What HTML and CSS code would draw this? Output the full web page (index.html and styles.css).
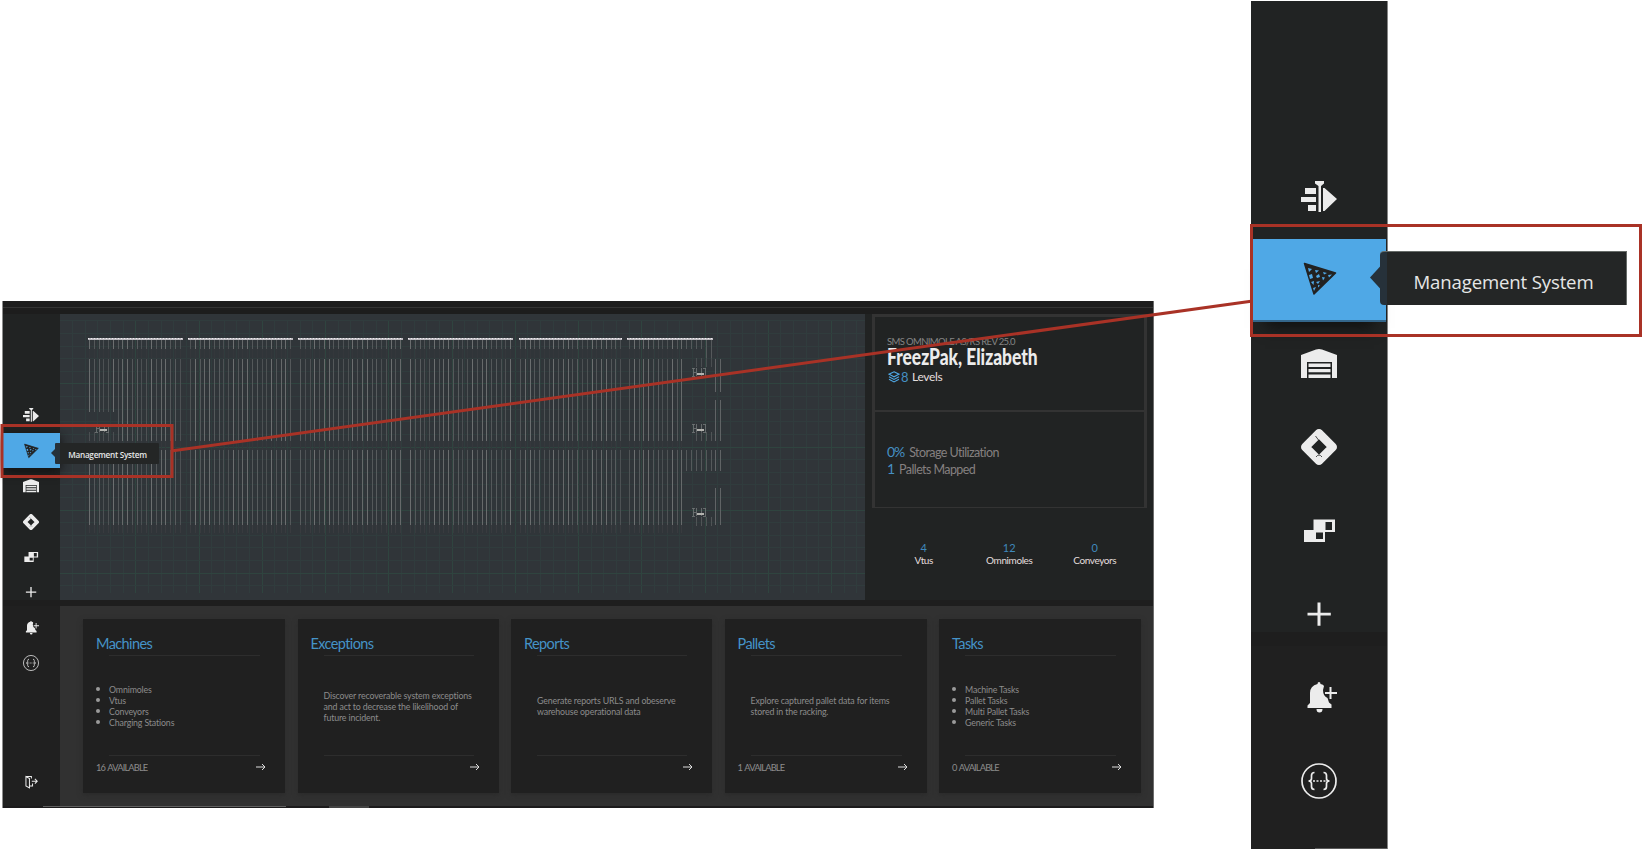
FILE: index.html
```html
<!DOCTYPE html>
<html lang="en">
<head>
<meta charset="utf-8">
<title>Management System</title>
<link rel="stylesheet" href="styles.css">
</head>
<body>
<svg class="defs" aria-hidden="true">
  <symbol id="sorter" viewBox="0 0 36 36"><path d="M4 9h11v6H4zM0 18h15v5H0zM7 26h8v6H7zM14 2h9v2.500L20 7v26h-2.500V7L14 4.500zM22 9h1.500L36 20 23.500 32H22z"/></symbol>
  <symbol id="pizza" viewBox="0 0 36 36"><path d="M3.500 2.500 34.500 12 13 33z" stroke="#222" stroke-width="1.500" stroke-linejoin="round"/><g fill="#4fa8e6"><path d="M7 7l4 1-3 3zM14 9l4 .5-3 2.500zM22 11l4 1-3 1.500zM27 14l4-.5-3 3zM8 14l3-1 1 4-3 1zM15 15l3-2 1 3-3 1zM21 16l3 .5-2 3zM10 21l3-1-.5 4zM15 21l4-1-2 3zM12 27l3-1-2 4zM17 24l2 .5-2 2z"/></g></symbol>
  <symbol id="warehouse" viewBox="0 0 36 36"><path d="M0 9 15 3.500Q18 2.500 21 3.500L36 9v23h-5V16H6v16H0zM7.500 17.500h22v3.500h-22zM7.500 23h22v3.200h-22zM7.500 28.500h22V32h-22z"/></symbol>
  <symbol id="diamond" viewBox="0 0 36 36"><path d="M18 4.300 31.700 18 18 31.700 4.300 18z" fill="none" stroke="currentColor" stroke-width="8.600" stroke-linejoin="round"/><path d="M14.500 7l3 4M15 28q3-4 6 0" fill="none" stroke="#222424" stroke-width=".8"/></symbol>
  <symbol id="pallets" viewBox="0 0 36 36"><path fill-rule="evenodd" d="M12.500 6.500H34V19H24v10H3V17h9.500zM24.500 9v8H31V9zM15 19.500V26h7v-6.500z"/></symbol>
  <symbol id="plus" viewBox="0 0 36 36"><path d="M16.500 6.500h3v10.300h10.300v2.700H19.500v10.300h-3V19.500H6.500v-2.700h10z"/></symbol>
  <symbol id="bell" viewBox="0 0 36 36"><path d="M16.500 4q0-2 1.500-2t1.500 2q3 .5 3.500 2l-1 4q0 6 4.500 8l1.500 4.500 2.500 2V28H6.500v-2.500L9 23V13q0-7 7.500-9zM15.500 29h6q0 3.500-3 3.500t-3-3.500zM28.500 7h2v5H36v2h-5.500v5h-2v-5H24v-2h4.500z"/></symbol>
  <symbol id="braces" viewBox="0 0 36 36"><g fill="none" stroke="currentColor" stroke-width="1.700"><circle cx="18" cy="18" r="17"/><path d="M13.500 9.500q-3 0-3 3v3q0 2.500-3 2.500 3 0 3 2.500v3q0 3 3 3M22.500 9.500q3 0 3 3v3q0 2.500 3 2.500-3 0-3 2.500v3q0 3-3 3M12 18h2m1.500 0h2m1.500 0h2m1.500 0h2"/></g></symbol>
  <symbol id="exit" viewBox="0 0 36 36"><path d="M5 4h14v5M5 4l9 5v24l-9-5zM14 28h8v-6M20 16h14M28 10l6 6-6 6" fill="none" stroke="currentColor" stroke-width="2.600"/></symbol>
  <symbol id="arrow" viewBox="0 0 10 8"><path d="M0 4h9M6 1l3 3-3 3" fill="none" stroke="currentColor" stroke-width="1"/></symbol>
  <symbol id="unit" viewBox="0 0 14 10"><path d="M1 1v8M4.500 1v8M9.500 1v8M13 1v8M0 9h3M0 1h3M11 1h3M11 9h3M1 5h3" fill="none" stroke="#6d7172" stroke-width=".9"/><path d="M5 7h7" stroke="#b4b4b0" stroke-width="1.600"/></symbol>
</svg>

<main class="stage">
  <section class="app">
    <header class="topbar"></header>
    <nav class="rail rail-small">
      <a class="rail-item"><svg><use href="#sorter"/></svg></a>
      <a class="rail-item active"><svg><use href="#pizza"/></svg><span class="tip">Management System</span></a>
      <a class="rail-item"><svg><use href="#warehouse"/></svg></a>
      <a class="rail-item"><svg><use href="#diamond"/></svg></a>
      <a class="rail-item"><svg><use href="#pallets"/></svg></a>
      <a class="rail-item"><svg><use href="#plus"/></svg></a>
      <a class="rail-item"><svg><use href="#bell"/></svg></a>
      <a class="rail-item"><svg><use href="#braces"/></svg></a>
      <a class="rail-item exit"><svg><use href="#exit"/></svg></a>
    </nav>
    <div class="map">
      <svg id="floor" viewBox="60 314 805 286" width="805" height="286" shape-rendering="crispEdges"></svg>
    </div>
    <aside class="info">
      <div class="box">
        <div class="site">
          <div class="rev">SMS OMNIMOLE AS/RS REV 25.0</div>
          <div class="name">FreezPak, Elizabeth</div>
          <div class="levels">
            <svg class="layers" viewBox="0 0 12 12"><path d="M6 .8 11 3.200 6 5.800 1 3.200zM1 5.800l5 2.600 5-2.600M1 8.300l5 2.600 5-2.600" fill="none" stroke="#4fa8e6" stroke-width="1.100"/></svg><b>8</b><span>Levels</span>
          </div>
        </div>
        <div class="usage">
          <div><b>0%</b><span>Storage Utilization</span></div>
          <div><b>1</b><span>Pallets Mapped</span></div>
        </div>
      </div>
      <div class="stats">
        <div><b>4</b>Vtus</div>
        <div><b>12</b>Omnimoles</div>
        <div><b>0</b>Conveyors</div>
      </div>
    </aside>
    <div class="cards">
      <article class="card">
        <h2>Machines</h2>
        <div class="body"><ul><li>Omnimoles</li><li>Vtus</li><li>Conveyors</li><li>Charging Stations</li></ul></div>
        <footer>16 AVAILABLE<svg><use href="#arrow"/></svg></footer>
      </article>
      <article class="card">
        <h2>Exceptions</h2>
        <div class="body"><p>Discover recoverable system exceptions<br>and act to decrease the likelihood of<br>future incident.</p></div>
        <footer><svg><use href="#arrow"/></svg></footer>
      </article>
      <article class="card">
        <h2>Reports</h2>
        <div class="body"><p>Generate reports URLS and obeserve<br>warehouse operational data</p></div>
        <footer><svg><use href="#arrow"/></svg></footer>
      </article>
      <article class="card">
        <h2>Pallets</h2>
        <div class="body"><p>Explore captured pallet data for items<br>stored in the racking.</p></div>
        <footer>1 AVAILABLE<svg><use href="#arrow"/></svg></footer>
      </article>
      <article class="card">
        <h2>Tasks</h2>
        <div class="body"><ul><li>Machine Tasks</li><li>Pallet Tasks</li><li>Multi Pallet Tasks</li><li>Generic Tasks</li></ul></div>
        <footer>0 AVAILABLE<svg><use href="#arrow"/></svg></footer>
      </article>
    </div>
    <div class="bottom"><i></i><i></i></div>
  </section>

  <nav class="rail rail-large">
    <a class="rail-item"><svg><use href="#sorter"/></svg></a>
    <a class="rail-item active"><svg><use href="#pizza"/></svg><span class="tip">Management System</span></a>
    <a class="rail-item"><svg><use href="#warehouse"/></svg></a>
    <a class="rail-item"><svg><use href="#diamond"/></svg></a>
    <a class="rail-item"><svg><use href="#pallets"/></svg></a>
    <a class="rail-item"><svg><use href="#plus"/></svg></a>
    <a class="rail-item"><svg><use href="#bell"/></svg></a>
    <a class="rail-item"><svg><use href="#braces"/></svg></a>
    <i class="rail-foot"></i>
  </nav>

  <svg class="callout" viewBox="0 0 1642 850">
    <path d="M173 450.700 1251 301.300"/>
    <rect x="2" y="425.500" width="170" height="51"/>
    <rect x="1251.500" y="225.500" width="389" height="110"/>
  </svg>
</main>
<script src="map.js"></script>
</body>
</html>
```

FILE: styles.css
```css
* { box-sizing: border-box; }
body {
  margin: 0;
  background: #fff;
  font-family: Lato, sans-serif;
  width: 1642px;
  height: 850px;
  overflow: hidden;
}
.defs { position: absolute; width: 0; height: 0; }
.stage {
  position: relative;
  display: flex;
  justify-content: space-between;
  width: 1642px;
  height: 850px;
  padding: 1px 254px 0 2px;
}
.callout {
  position: absolute;
  inset: 0;
  width: 1642px;
  height: 850px;
  fill: none;
  stroke: #a93226;
  stroke-width: 3;
}

/* dashboard */
.app {
  display: grid;
  grid-template-columns: 57px 805px 288px;
  grid-template-rows: 13px 286px 206px 2px;
  width: 1152px;
  height: 507px;
  margin-top: 300px;
  border-left: 1px solid #8e8e8e;
  border-right: 1px solid #6c6c6c;
  background: #1e1e1e;
}
.topbar {
  grid-column: 1 / 4;
  background: linear-gradient(#1d1d1d 6px, #333 6px, #333 7px, #1d1d1d 7px);
}

/* icon rails */
.rail { display: flex; flex-direction: column; color: #ececec; }
.rail-item {
  position: relative;
  display: flex;
  align-items: center;
  justify-content: center;
  flex: none;
}
.rail-item svg { display: block; fill: currentColor; }
.rail-item.active { background: #4fa8e6; color: #222; }
.tip {
  position: absolute;
  display: flex;
  align-items: center;
  justify-content: center;
  color: #e6e6e6;
  font-family: "Open Sans", sans-serif;
  white-space: nowrap;
}
.tip::before { content: ""; position: absolute; background: #26313a; }

.rail-small {
  grid-row: 2 / 4;
  padding-top: 83.500px;
  background: linear-gradient(#212323 286px, #1e1e1e 286px, #1e1e1e 292px, #202020 292px);
}
.rail-small .rail-item { height: 35.450px; padding-right: 2px; }
.rail-small .rail-item svg { width: 16px; height: 16px; }
.rail-small .exit { margin-top: 83px; }
.rail-small .exit svg { width: 14px; height: 14px; }
.rail-small .active { box-shadow: 0 3px 12px #111; }
.rail-small .tip {
  z-index: 2;
  left: 52px;
  top: 10px;
  width: 104px;
  height: 21px;
  border-radius: 1px;
  background: linear-gradient(90deg, #26313a 5px, #242626 5px);
  font-size: 8.200px;
  font-weight: 600;
  letter-spacing: -0.280px;
  padding: 3px 0 0 1px;
}
.rail-small .tip::before {
  left: -4px;
  top: 5px;
  width: 5px;
  height: 10px;
  clip-path: polygon(0 50%, 100% 0, 100% 100%);
}

.rail-large {
  width: 137px;
  height: 848px;
  padding-top: 154px;
  border-right: 1px solid #858585;
  background: linear-gradient(#212323 631px, #1e1e1e 631px, #1e1e1e 645px, #202020 645px);
}
.rail-large .rail-item { height: 83.500px; padding-right: 1px; }
.rail-large .rail-item svg { width: 36px; height: 36px; }
.rail-large .active {
  margin: 0 1px 0 2px;
  padding-right: 2px;
  border-bottom: 2px solid #34668b;
  box-shadow: 0 18px 14px -12px #111;
}
.rail-large .tip {
  left: 127px;
  top: 12px;
  width: 247px;
  height: 54px;
  border-radius: 4px 0 0 4px;
  border-top: 1px solid #666b68;
  border-right: 1px solid #666b68;
  background: linear-gradient(90deg, #26313a 7px, #242626 7px);
  font-size: 18.600px;
  font-weight: 500;
  letter-spacing: -0.150px;
  padding: 6px 0 0 1px;
}
.rail-large .tip::before {
  left: -10px;
  top: 14px;
  width: 11px;
  height: 24px;
  clip-path: polygon(0 50%, 100% 0, 100% 100%);
}
.rail-foot { width: 72px; height: 1px; margin: auto 0 0 auto; background: #5a5a5a; }

/* floor map */
.map { background: #303539; }
.map svg { display: block; }

/* site summary */
.info { padding-left: 7px; background: #212323; }
.box {
  width: 275px;
  height: 194px;
  border: 3px solid #333;
  border-bottom-width: 1px;
}
.site {
  height: 95px;
  padding: 19px 0 0 12px;
  border-bottom: 2px solid #333;
  white-space: nowrap;
}
.rev { height: 10px; font-size: 9.500px; line-height: 11px; letter-spacing: -0.630px; color: #858585; }
.name {
  height: 21px;
  font-size: 22px;
  line-height: 21px;
  font-weight: 900;
  color: #ececec;
  transform: scaleX(.79);
  transform-origin: left;
}
.levels {
  display: flex;
  align-items: center;
  height: 15px;
  margin-top: 2px;
  font-size: 12px;
  line-height: 15px;
  color: #e4dede;
}
.levels b { width: 12px; padding: 2px 0 0 1px; font-size: 13px; font-weight: 400; color: #4590c4; }
.levels span { letter-spacing: -0.300px; }
.layers { width: 12px; height: 12px; margin-left: 1px; }
.usage { padding: 31px 0 0 12px; color: #858080; }
.usage div { display: flex; align-items: baseline; height: 17px; line-height: 17px; font-size: 12.500px; letter-spacing: -0.580px; }
.usage b { margin-right: 5px; font-size: 14px; font-weight: 400; color: #4590c4; letter-spacing: -1.100px; }
.stats {
  display: grid;
  grid-template-columns: repeat(3, 85.500px);
  padding: 34px 0 0 9px;
  text-align: center;
  font-size: 10px;
  line-height: 12px;
  letter-spacing: -0.400px;
  color: #e4dede;
}
.stats b { display: block; font-size: 11px; font-weight: 400; color: #3f88bb; letter-spacing: 0; }

/* cards */
.cards {
  grid-column: 2 / 4;
  display: grid;
  grid-template-columns: 202px 201px 201px 202px 202px;
  justify-content: space-between;
  margin-top: 6px;
  padding: 13px 12px 13px 23px;
  background: #313131;
}
.card {
  display: flex;
  flex-direction: column;
  padding: 15px 13px 0;
  background: #202020;
  box-shadow: 0 2px 5px #2a2a2a;
  color: #8c8c8c;
  white-space: nowrap;
}
.card h2 { margin: 0; height: 21px; font-size: 14.500px; line-height: 20px; font-weight: 400; color: #4593c8; letter-spacing: -0.600px; }
.body {
  display: flex;
  align-items: center;
  height: 101px;
  margin: 0 12px 0 13px;
  border-top: 1px solid #2d2d2d;
  border-bottom: 1px solid #2d2d2d;
  font-size: 8.800px;
  line-height: 11.050px;
  letter-spacing: -0.140px;
}
.body p, .body ul { margin: 1.500px 0 0; padding: 0; list-style: none; }
.body li { position: relative; }
.body li::before {
  content: "";
  position: absolute;
  left: -13px;
  top: 3px;
  width: 4px;
  height: 4px;
  border-radius: 50%;
  background: #9a9a9a;
}
.card footer {
  display: flex;
  align-items: center;
  height: 22px;
  padding-right: 6px;
  font-size: 9.300px;
  letter-spacing: -0.850px;
  word-spacing: 1px;
}
.card footer svg { width: 10px; height: 8px; margin-left: auto; color: #ddd; }
.bottom { grid-column: 1 / 4; display: flex; padding-left: 40px; gap: 43px; background: #1c1b1c; }
.bottom i { width: 243px; height: 1px; background: #606060; }
.bottom i + i { width: 40px; height: 2px; background: #444; }
```

FILE: map.js
```javascript
(function () {
  var svg = document.getElementById('floor');
  var out = '';
  function rect(x, y, w, h, fill) {
    out += '<rect x="' + x + '" y="' + y + '" width="' + w + '" height="' + h + '" fill="' + fill + '"/>';
  }

  // grid: a stronger line every fifth step
  for (var i = 0; i < 63; i++) {
    rect(Math.round(72 + i * 12.65), 321, 1, 272, i % 5 === 0 && i ? '#2f443f' : '#303c3d');
  }
  for (var j = 0; j < 22; j++) {
    rect(60, Math.round(320.3 + j * 12.62), 805, 1, j % 5 === 0 && j ? '#2f443f' : '#303c3d');
  }

  // rack sections: [header start, header end, first lane, last lane]
  var tones = ['#6a6d6e', '#54585a', '#585c5e', '#4d5154', '#4f5355', '#6c6f70', '#54585a', '#66696a'];
  var sections = [
    [88, 183, 89, 181], [188, 293, 190, 292], [298, 403, 300, 402],
    [408, 513, 410, 511], [519, 622, 520, 621], [627, 713, 629, 683]
  ];
  var n = 0;
  sections.forEach(function (s) {
    rect(s[0], 338, s[1] - s[0], 2, '#bdbabf');
    for (var d = s[0]; d < s[1]; d += 3) rect(d, 338, 1, 1, '#f0eef2');
    for (var p = s[2]; p <= s[3]; p += 4.77) {
      var x = Math.round(p), c = tones[n++ % tones.length];
      rect(x, 340, 1, 9, c);
      rect(x, 349, 1, 10, '#34373b');
      if (x < 116) {
        rect(x, 359, 1, 53, c);
        rect(x, 432, 1, 9, '#4a4e51');
      } else {
        rect(x, 359, 1, 82, c);
      }
      rect(x, 441, 1, 9, '#35383c');
      rect(x, 450, 1, 75, c);
      rect(x, 525, 1, 8, '#393b3f');
    }
  });

  // service bays on the right edge
  [686, 691, 696, 701, 706, 711].forEach(function (x, k) {
    rect(x, 340, 1, k > 3 ? 26 : 9, '#55595b');
    rect(x, 450, 1, 21, '#55595b');
    if (k > 1) {
      rect(x, 358, 1, 9, '#4a4e51');
      rect(x, 432, 1, 9, '#505456');
      rect(x, 517, 1, 9, '#505456');
    }
  });
  [715, 720].forEach(function (x) {
    [[359, 33], [400, 41], [450, 21], [488, 37]].forEach(function (r) {
      rect(x, r[0], 1, r[1], '#606365');
    });
  });
  [[95, 423], [692, 367], [692, 423], [692, 507]].forEach(function (u) {
    out += '<use href="#unit" x="' + u[0] + '" y="' + u[1] + '" width="14" height="10"/>';
  });
  svg.innerHTML = out;
})();
```
